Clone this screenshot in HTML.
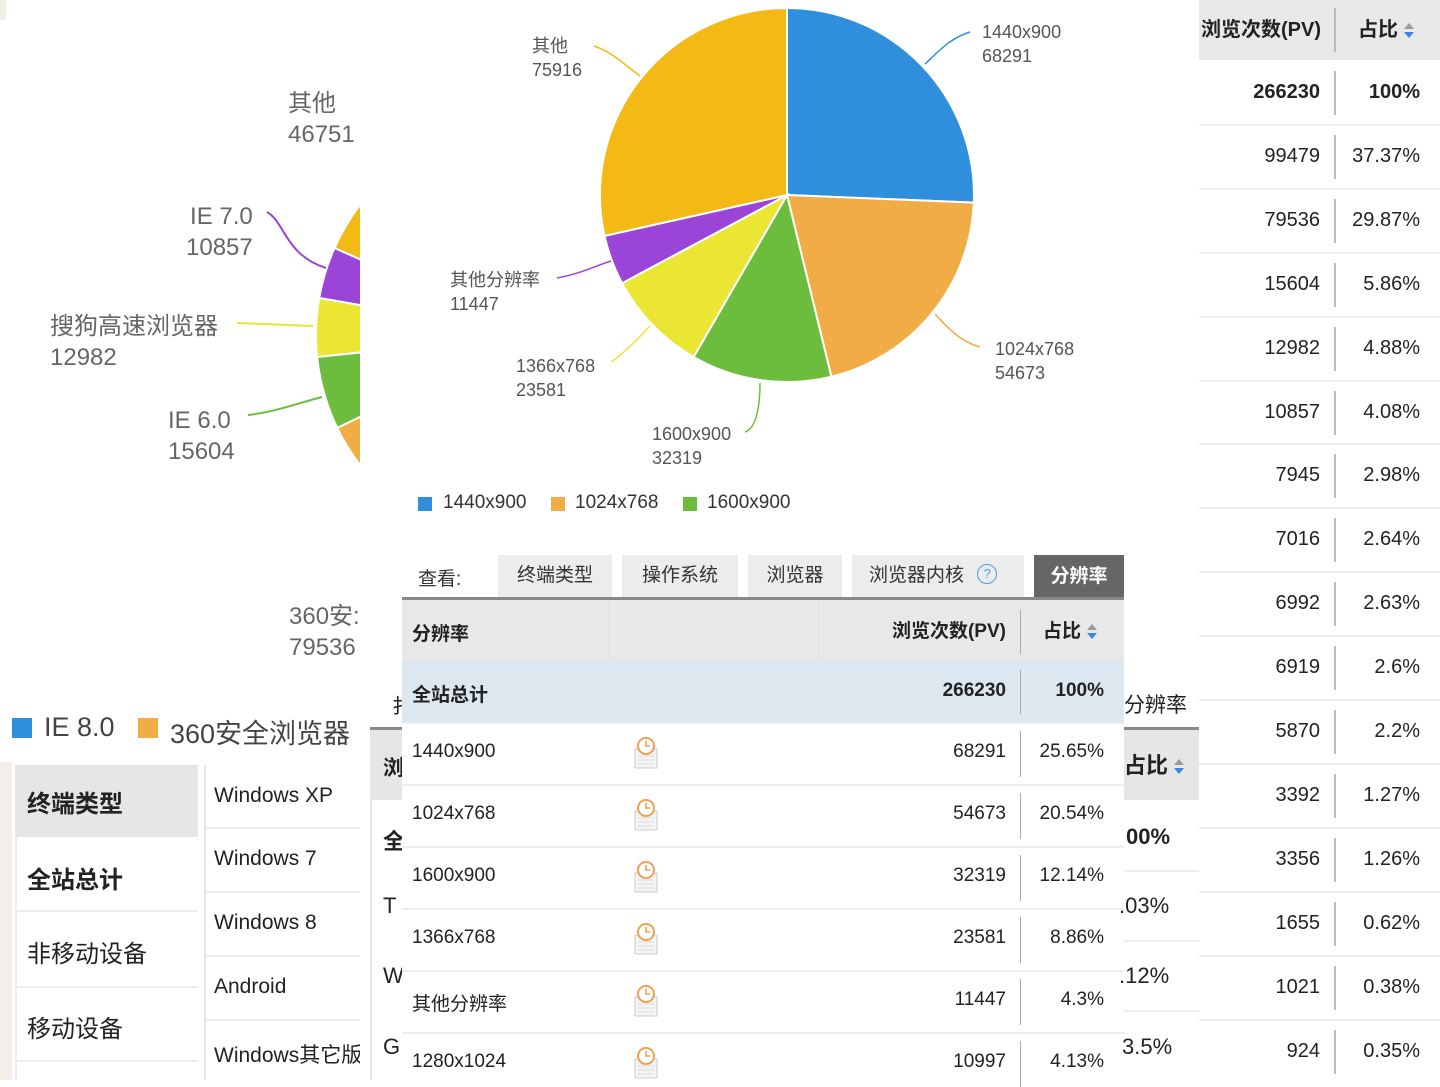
<!DOCTYPE html>
<html><head><meta charset="utf-8">
<style>
*{margin:0;padding:0;box-sizing:border-box}
body{width:1440px;height:1080px;position:relative;overflow:hidden;background:#fff;font-family:"Liberation Sans","Noto Sans CJK SC",sans-serif;color:#222}
.a{position:absolute;white-space:nowrap}
.lbl{color:#666;font-size:24px;line-height:31px}
.cl{color:#555;font-size:18px;line-height:24px}
.r{text-align:right}
.b{font-weight:bold}
.sort{display:inline-block;width:10px;height:16px;vertical-align:middle;margin-left:6px;position:relative}
.sort:before{content:"";position:absolute;left:0;top:0;border-left:5px solid transparent;border-right:5px solid transparent;border-bottom:6px solid #999}
.sort:after{content:"";position:absolute;left:0;top:9px;border-left:5px solid transparent;border-right:5px solid transparent;border-top:6px solid #3a86e0}
</style></head><body>

<!-- LEFT PANEL -->
<div class="a" style="left:0;top:0;width:6px;height:20px;background:#f2efe8"></div>
<div class="a" style="left:0;top:0;width:360px;height:500px;overflow:hidden">
<svg width="360" height="500" style="position:absolute;left:0;top:0">
<g stroke="#fff" stroke-width="2">
<path d="M530,335 L334.5,248 A214,214 0 0 1 530,121 Z" fill="#f3b914"/>
<path d="M530,335 L319.2,298 A214,214 0 0 1 334.5,248 Z" fill="#9b45d8"/>
<path d="M530,335 L317.1,357 A214,214 0 0 1 319.2,298 Z" fill="#ebe634"/>
<path d="M530,335 L337.3,428 A214,214 0 0 1 317.1,357 Z" fill="#6cbd3e"/>
<path d="M530,335 L530,549 A214,214 0 0 1 337.3,428 Z" fill="#f2ac45"/>
</g>
<path d="M267,212 C285,222 285,255 326,268" stroke="#9b45d8" stroke-width="2" fill="none"/>
<path d="M237,323 L313,326" stroke="#ebe634" stroke-width="2" fill="none"/>
<path d="M248,415 C275,412 295,404 322,397" stroke="#6cbd3e" stroke-width="2" fill="none"/>
</svg>
</div>
<div class="a lbl" style="left:288px;top:88px">其他<br>46751</div>
<div class="a lbl r" style="left:186px;top:201px">IE 7.0<br>10857</div>
<div class="a lbl" style="left:50px;top:311px">搜狗高速浏览器<br>12982</div>
<div class="a lbl" style="left:168px;top:405px">IE 6.0<br>15604</div>
<div class="a lbl" style="left:289px;top:601px">360安:<br>79536</div>
<div class="a" style="left:12px;top:718px;width:20px;height:20px;background:#2f8fdd"></div>
<div class="a" style="left:44px;top:712px;font-size:27px;color:#444">IE 8.0</div>
<div class="a" style="left:138px;top:718px;width:20px;height:20px;background:#f2ac45"></div>
<div class="a" style="left:170px;top:712px;font-size:27px;color:#444">360安全浏览器</div>
<div class="a" style="left:0;top:762px;width:12px;height:318px;background:#f2efe8"></div>
<div class="a" style="left:15px;top:765px;width:183px;height:72px;background:#e6e6e6"></div>
<div class="a b" style="left:27px;top:784px;font-size:24px">终端类型</div>
<div class="a b" style="left:27px;top:860px;font-size:24px">全站总计</div>
<div class="a" style="left:15px;top:910px;width:183px;height:2px;background:#eee"></div>
<div class="a" style="left:27px;top:934px;font-size:24px">非移动设备</div>
<div class="a" style="left:15px;top:986px;width:183px;height:2px;background:#eee"></div>
<div class="a" style="left:27px;top:1009px;font-size:24px">移动设备</div>
<div class="a" style="left:15px;top:1060px;width:183px;height:2px;background:#eee"></div>
<div class="a" style="left:15px;top:837px;width:2px;height:243px;background:#eee"></div>
<div class="a" style="left:204px;top:765px;width:2px;height:315px;background:#e8e8e8"></div>
<div class="a" style="left:214px;top:784px;font-size:21px">Windows XP</div>
<div class="a" style="left:206px;top:827px;width:154px;height:2px;background:#eee"></div>
<div class="a" style="left:214px;top:847px;font-size:21px">Windows 7</div>
<div class="a" style="left:206px;top:891px;width:154px;height:2px;background:#eee"></div>
<div class="a" style="left:214px;top:911px;font-size:21px">Windows 8</div>
<div class="a" style="left:206px;top:955px;width:154px;height:2px;background:#eee"></div>
<div class="a" style="left:214px;top:975px;font-size:21px">Android</div>
<div class="a" style="left:206px;top:1019px;width:154px;height:2px;background:#eee"></div>
<div class="a" style="left:214px;top:1039px;font-size:21px;width:146px;overflow:hidden">Windows其它版</div>

<!-- MIDDLE BACK PANEL -->
<div class="a" style="left:362px;top:680px;width:837px;height:400px;background:#fff"></div>
<div class="a" style="left:370px;top:765px;width:2px;height:315px;background:#e4e4e4"></div>
<div class="a" style="left:392px;top:690px;font-size:20px">扌</div>
<div class="a" style="left:1124px;top:689px;font-size:21px">分辨率</div>
<div class="a" style="left:370px;top:727px;width:829px;height:3px;background:#888"></div>
<div class="a" style="left:370px;top:730px;width:829px;height:70px;background:#e6e6e6"></div>
<div class="a b" style="left:383px;top:752px;font-size:21px">浏</div>
<div class="a b" style="left:383px;top:824px;font-size:22px">全</div>
<div class="a" style="left:383px;top:893px;font-size:22px">T</div>
<div class="a" style="left:383px;top:963px;font-size:22px">W</div>
<div class="a" style="left:383px;top:1034px;font-size:22px">G</div>
<div class="a" style="left:1124px;top:870px;width:75px;height:2px;background:#eee"></div>
<div class="a" style="left:1124px;top:940px;width:75px;height:2px;background:#eee"></div>
<div class="a" style="left:1124px;top:1010px;width:75px;height:2px;background:#eee"></div>

<!-- RIGHT PANEL -->
<div class="a" style="left:1199px;top:0;width:241px;height:1080px;background:#fff"></div>
<div class="a" style="left:1199px;top:0;width:241px;height:60px;background:#e8e8e8"></div>
<div class="a b r" style="left:1199px;top:13px;width:122px;font-size:20px">浏览次数(PV)</div>
<div class="a" style="left:1334px;top:8px;width:2px;height:44px;background:#bbb"></div>
<div class="a b" style="left:1358px;top:13px;font-size:20px">占比<span class="sort"></span></div>
<div id="rt"></div>

<!-- CENTER CHART PANEL -->
<div class="a" style="left:360px;top:0;width:839px;height:545px;background:#fff"></div>
<svg class="a" style="left:0;top:0" width="1200" height="545">
<g stroke="#fff" stroke-width="2">
<path d="M787,195 L787,8 A187,187 0 0 1 973.8,202.6 Z" fill="#2f8fdd"/>
<path d="M787,195 L973.8,202.6 A187,187 0 0 1 831.4,376.7 Z" fill="#f2ac45"/>
<path d="M787,195 L831.4,376.7 A187,187 0 0 1 693.6,357 Z" fill="#6cbd3e"/>
<path d="M787,195 L693.6,357 A187,187 0 0 1 622.1,283.2 Z" fill="#ebe634"/>
<path d="M787,195 L622.1,283.2 A187,187 0 0 1 604.5,235.9 Z" fill="#9b45d8"/>
<path d="M787,195 L604.5,235.9 A187,187 0 0 1 787,8 Z" fill="#f3b914"/>
</g>
<g fill="none" stroke-width="1.5">
<path d="M594,46 C612,52 625,65 640,76" stroke="#f3b914"/>
<path d="M970,32 C950,38 938,52 925,64" stroke="#2f8fdd"/>
<path d="M557,278 C580,274 595,266 611,261" stroke="#9b45d8"/>
<path d="M611,362 C622,355 635,342 650,326" stroke="#ebe634"/>
<path d="M745,432 C758,428 760,400 760,383" stroke="#6cbd3e"/>
<path d="M980,347 C960,342 945,325 935,314" stroke="#f2ac45"/>
</g>
</svg>
<div class="a cl" style="left:532px;top:34px">其他<br>75916</div>
<div class="a cl" style="left:982px;top:20px">1440x900<br>68291</div>
<div class="a cl" style="left:450px;top:268px">其他分辨率<br>11447</div>
<div class="a cl" style="left:516px;top:354px">1366x768<br>23581</div>
<div class="a cl" style="left:652px;top:422px">1600x900<br>32319</div>
<div class="a cl" style="left:995px;top:337px">1024x768<br>54673</div>
<div class="a" style="left:418px;top:497px;width:14px;height:14px;background:#2f8fdd"></div>
<div class="a" style="left:443px;top:492px;font-size:19px;color:#333">1440x900</div>
<div class="a" style="left:551px;top:497px;width:14px;height:14px;background:#f2ac45"></div>
<div class="a" style="left:575px;top:492px;font-size:19px;color:#333">1024x768</div>
<div class="a" style="left:683px;top:497px;width:14px;height:14px;background:#6cbd3e"></div>
<div class="a" style="left:707px;top:492px;font-size:19px;color:#333">1600x900</div>

<!-- CENTER TABLE -->
<div class="a" style="left:402px;top:545px;width:722px;height:535px;background:#fff"></div>
<div class="a" style="left:418px;top:564px;font-size:19px;color:#333">查看:</div>
<div class="a" style="left:498px;top:555px;width:114px;height:42px;background:#ececec;font-size:19px;text-align:center;line-height:42px;color:#333">终端类型</div>
<div class="a" style="left:622px;top:555px;width:116px;height:42px;background:#ececec;font-size:19px;text-align:center;line-height:42px;color:#333">操作系统</div>
<div class="a" style="left:748px;top:555px;width:94px;height:42px;background:#ececec;font-size:19px;text-align:center;line-height:42px;color:#333">浏览器</div>
<div class="a" style="left:852px;top:555px;width:172px;height:42px;background:#ececec;font-size:19px;line-height:42px;color:#333;padding-left:17px">浏览器内核 <span style="display:inline-block;width:20px;height:20px;border:1.5px solid #4a9be8;border-radius:50%;color:#4a9be8;font-size:13px;line-height:17px;text-align:center;vertical-align:3px;margin-left:8px">?</span></div>
<div class="a b" style="left:1034px;top:555px;width:90px;height:43px;background:#666;color:#fff;font-size:19px;text-align:center;line-height:43px">分辨率</div>
<div class="a" style="left:402px;top:597px;width:722px;height:3px;background:#888"></div>
<div class="a" style="left:402px;top:600px;width:722px;height:60px;background:#e8e8e8"></div>
<div class="a" style="left:608px;top:600px;width:1px;height:122px;background:#e0e0e0"></div>
<div class="a" style="left:818px;top:600px;width:1px;height:122px;background:#e0e0e0"></div>
<div class="a b" style="left:412px;top:619px;font-size:19px">分辨率</div>
<div class="a b r" style="left:820px;top:616px;width:186px;font-size:19px">浏览次数(PV)</div>
<div class="a" style="left:1020px;top:610px;width:1px;height:44px;background:#aaa"></div>
<div class="a b" style="left:1043px;top:616px;font-size:19px">占比<span class="sort"></span></div>
<div class="a" style="left:402px;top:660px;width:722px;height:62px;background:#dde7f0"></div>
<div class="a b" style="left:412px;top:680px;font-size:19px">全站总计</div>
<div class="a b r" style="left:820px;top:680px;width:186px;font-size:19px">266230</div>
<div class="a" style="left:1020px;top:670px;width:1px;height:44px;background:#aaa"></div>
<div class="a b r" style="left:1024px;top:680px;width:80px;font-size:19px">100%</div>
<div id="ct"></div>

<!-- back panel right-edge text (over table edge) -->
<div class="a b" style="left:1124px;top:748px;font-size:22px">占比<span class="sort"></span></div>
<div class="a b" style="left:1126px;top:824px;font-size:22px">00%</div>
<div class="a" style="left:1119px;top:893px;font-size:22px">.03%</div>
<div class="a" style="left:1119px;top:963px;font-size:22px">.12%</div>
<div class="a" style="left:1122px;top:1034px;font-size:22px">3.5%</div>

<script>
var rows=[["1440x900","68291","25.65%"],["1024x768","54673","20.54%"],["1600x900","32319","12.14%"],["1366x768","23581","8.86%"],["其他分辨率","11447","4.3%"],["1280x1024","10997","4.13%"]];
var icon='<svg width="26" height="34" viewBox="0 0 26 34"><rect x="2" y="14" width="22" height="19" fill="#f4f4f4" stroke="#ccc"/><path d="M5,21h16M5,25h16M5,29h16" stroke="#ddd"/><circle cx="13" cy="11" r="8" fill="#fff" stroke="#f0a050" stroke-width="2"/><path d="M13,6v5h4" stroke="#f0a050" stroke-width="1.6" fill="none"/></svg>';
var h="";
rows.forEach(function(r,i){var t=722+i*62;
h+='<div class="a" style="left:402px;top:'+t+'px;width:722px;height:2px;background:#eee"></div>';
h+='<div class="a" style="left:412px;top:'+(t+19)+'px;font-size:19px">'+r[0]+'</div>';
h+='<div class="a" style="left:633px;top:'+(t+13)+'px">'+icon+'</div>';
h+='<div class="a r" style="left:820px;top:'+(t+19)+'px;width:186px;font-size:19px">'+r[1]+'</div>';
h+='<div class="a" style="left:1020px;top:'+(t+9)+'px;width:1px;height:46px;background:#aaa"></div>';
h+='<div class="a r" style="left:1024px;top:'+(t+19)+'px;width:80px;font-size:19px">'+r[2]+'</div>';});
document.getElementById("ct").innerHTML=h;
var rr=[["266230","100%"],["99479","37.37%"],["79536","29.87%"],["15604","5.86%"],["12982","4.88%"],["10857","4.08%"],["7945","2.98%"],["7016","2.64%"],["6992","2.63%"],["6919","2.6%"],["5870","2.2%"],["3392","1.27%"],["3356","1.26%"],["1655","0.62%"],["1021","0.38%"],["924","0.35%"]];
h="";
rr.forEach(function(r,i){var c=93+i*63.9;var b=i==0?"font-weight:bold;":"";
if(i>0)h+='<div class="a" style="left:1199px;top:'+Math.round(c-33)+'px;width:241px;height:2px;background:#eee"></div>';
h+='<div class="a r" style="left:1199px;top:'+Math.round(c-12)+'px;width:121px;font-size:20px;'+b+'">'+r[0]+'</div>';
h+='<div class="a" style="left:1334px;top:'+Math.round(c-22)+'px;width:2px;height:44px;background:#bbb"></div>';
h+='<div class="a r" style="left:1340px;top:'+Math.round(c-12)+'px;width:80px;font-size:20px;'+b+'">'+r[1]+'</div>';});
document.getElementById("rt").innerHTML=h;
</script>
</body></html>
